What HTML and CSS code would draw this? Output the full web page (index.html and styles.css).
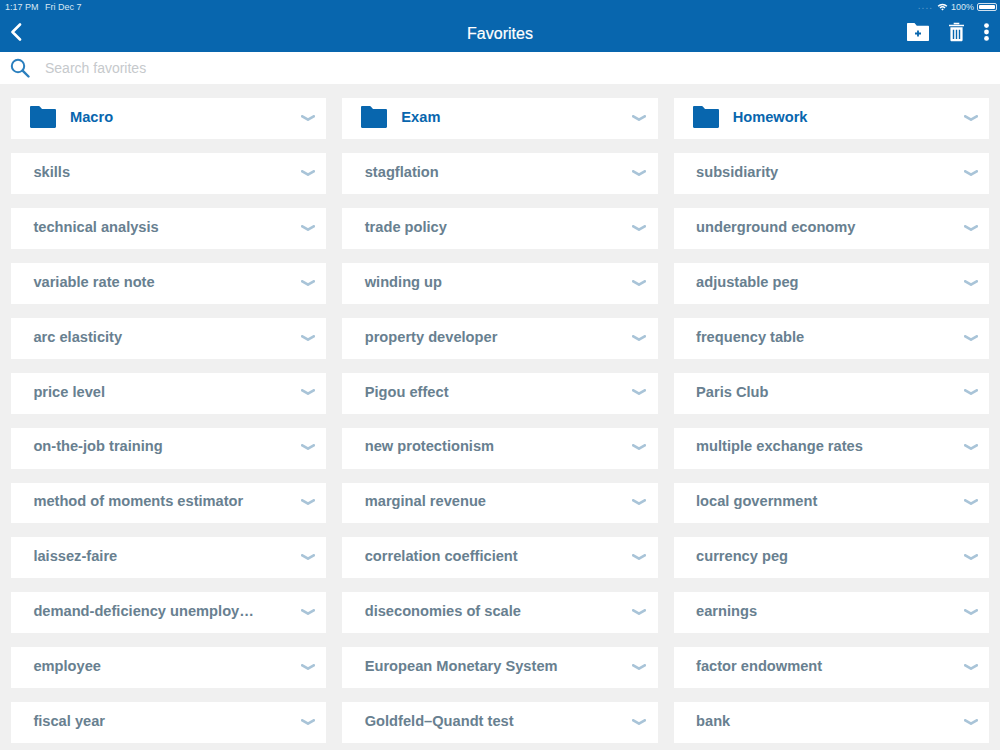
FILE: index.html
```html
<!DOCTYPE html>
<html lang="en">
<head>
<meta charset="utf-8">
<title>Favorites</title>
<link rel="stylesheet" href="styles.css">
</head>
<body>
<svg class="defs" width="0" height="0" aria-hidden="true">
  <symbol id="folder" viewBox="0 0 26 22"><path d="M0 1.200C0 .5.5 0 1.200 0h7.600c.5 0 .8.2 1 .5L12 3h12.800c.7 0 1.200.5 1.200 1.200v16.600c0 .7-.5 1.200-1.200 1.200H1.200C.5 22 0 21.500 0 20.800z"/></symbol>
  <symbol id="chev" viewBox="0 0 14 6"><path d="M1.300 1.300 7 4.600 12.700 1.300" fill="none" stroke-width="2.700" stroke-linecap="round" stroke-linejoin="round"/></symbol>
</svg>
<header class="bar">
  <div class="status">
    <div class="status-left"><span>1:17 PM</span><span>Fri Dec 7</span></div>
    <div class="status-right">
      <span class="signal">....</span>
      <svg class="wifi" width="11" height="8" viewBox="0 0 13 10"><path d="M.4 3.300a8.800 8.800 0 0 1 12.200 0l-1.300 1.300a7 7 0 0 0-9.600 0zM2.700 5.600a5.500 5.500 0 0 1 7.600 0L9 6.900a3.700 3.700 0 0 0-5 0zM4.900 7.800a2.300 2.300 0 0 1 3.200 0L6.500 9.500z" fill="#fff"/></svg>
      <span>100%</span>
      <span class="battery"><span class="battery-fill"></span></span>
    </div>
  </div>
  <div class="nav">
    <svg class="back" width="12" height="18" viewBox="0 0 12 18"><path d="M10 1.500 2.500 9l7.500 7.500" fill="none" stroke="#fff" stroke-width="2.600" stroke-linecap="round" stroke-linejoin="round"/></svg>
    <h1 class="title">Favorites</h1>
    <div class="actions">
      <svg width="22" height="18" viewBox="0 0 22 18"><path d="M0 1c0-.6.4-1 1-1h6.500L9.800 2.800H21c.6 0 1 .4 1 1V17c0 .6-.4 1-1 1H1c-.6 0-1-.4-1-1z" fill="#fff"/><path d="M11 7.500v6M8 10.500h6" stroke="#0866ae" stroke-width="1.800"/></svg>
      <svg width="15" height="20" viewBox="0 0 16 20"><path d="M0 2.200h16v1.600H0zM5 .2h6v1.500H5z" fill="#fff"/><path d="M1.500 5h13v13.500c0 .8-.6 1.400-1.400 1.400H2.900c-.8 0-1.400-.6-1.400-1.400z" fill="#fff"/><path d="M4.800 7.500v10M8 7.500v10M11.200 7.500v10" stroke="#0866ae" stroke-width="1.500"/></svg>
      <svg width="5" height="18" viewBox="0 0 5 18"><circle cx="2.500" cy="2.600" r="2.400" fill="#fff"/><circle cx="2.500" cy="9" r="2.400" fill="#fff"/><circle cx="2.500" cy="15.400" r="2.400" fill="#fff"/></svg>
    </div>
  </div>
</header>
<div class="search">
  <svg width="20" height="20" viewBox="0 0 20 20"><circle cx="8" cy="8" r="6.200" fill="none" stroke="#2a7fbe" stroke-width="2"/><path d="M12.600 12.600 18.500 18.500" stroke="#2a7fbe" stroke-width="2.400" stroke-linecap="round"/></svg>
  <span class="placeholder">Search favorites</span>
</div>
<main class="grid">
  <div class="card folder"><svg class="ficon"><use href="#folder"/></svg><span class="label">Macro</span><svg class="chev"><use href="#chev"/></svg></div>
  <div class="card folder"><svg class="ficon"><use href="#folder"/></svg><span class="label">Exam</span><svg class="chev"><use href="#chev"/></svg></div>
  <div class="card folder"><svg class="ficon"><use href="#folder"/></svg><span class="label">Homework</span><svg class="chev"><use href="#chev"/></svg></div>

  <div class="card"><span class="label">skills</span><svg class="chev"><use href="#chev"/></svg></div>
  <div class="card"><span class="label">stagflation</span><svg class="chev"><use href="#chev"/></svg></div>
  <div class="card"><span class="label">subsidiarity</span><svg class="chev"><use href="#chev"/></svg></div>

  <div class="card"><span class="label">technical analysis</span><svg class="chev"><use href="#chev"/></svg></div>
  <div class="card"><span class="label">trade policy</span><svg class="chev"><use href="#chev"/></svg></div>
  <div class="card"><span class="label">underground economy</span><svg class="chev"><use href="#chev"/></svg></div>

  <div class="card"><span class="label">variable rate note</span><svg class="chev"><use href="#chev"/></svg></div>
  <div class="card"><span class="label">winding up</span><svg class="chev"><use href="#chev"/></svg></div>
  <div class="card"><span class="label">adjustable peg</span><svg class="chev"><use href="#chev"/></svg></div>

  <div class="card"><span class="label">arc elasticity</span><svg class="chev"><use href="#chev"/></svg></div>
  <div class="card"><span class="label">property developer</span><svg class="chev"><use href="#chev"/></svg></div>
  <div class="card"><span class="label">frequency table</span><svg class="chev"><use href="#chev"/></svg></div>

  <div class="card"><span class="label">price level</span><svg class="chev"><use href="#chev"/></svg></div>
  <div class="card"><span class="label">Pigou effect</span><svg class="chev"><use href="#chev"/></svg></div>
  <div class="card"><span class="label">Paris Club</span><svg class="chev"><use href="#chev"/></svg></div>

  <div class="card"><span class="label">on-the-job training</span><svg class="chev"><use href="#chev"/></svg></div>
  <div class="card"><span class="label">new protectionism</span><svg class="chev"><use href="#chev"/></svg></div>
  <div class="card"><span class="label">multiple exchange rates</span><svg class="chev"><use href="#chev"/></svg></div>

  <div class="card"><span class="label">method of moments estimator</span><svg class="chev"><use href="#chev"/></svg></div>
  <div class="card"><span class="label">marginal revenue</span><svg class="chev"><use href="#chev"/></svg></div>
  <div class="card"><span class="label">local government</span><svg class="chev"><use href="#chev"/></svg></div>

  <div class="card"><span class="label">laissez-faire</span><svg class="chev"><use href="#chev"/></svg></div>
  <div class="card"><span class="label">correlation coefficient</span><svg class="chev"><use href="#chev"/></svg></div>
  <div class="card"><span class="label">currency peg</span><svg class="chev"><use href="#chev"/></svg></div>

  <div class="card"><span class="label">demand-deficiency unemploy…</span><svg class="chev"><use href="#chev"/></svg></div>
  <div class="card"><span class="label">diseconomies of scale</span><svg class="chev"><use href="#chev"/></svg></div>
  <div class="card"><span class="label">earnings</span><svg class="chev"><use href="#chev"/></svg></div>

  <div class="card"><span class="label">employee</span><svg class="chev"><use href="#chev"/></svg></div>
  <div class="card"><span class="label">European Monetary System</span><svg class="chev"><use href="#chev"/></svg></div>
  <div class="card"><span class="label">factor endowment</span><svg class="chev"><use href="#chev"/></svg></div>

  <div class="card"><span class="label">fiscal year</span><svg class="chev"><use href="#chev"/></svg></div>
  <div class="card"><span class="label">Goldfeld–Quandt test</span><svg class="chev"><use href="#chev"/></svg></div>
  <div class="card"><span class="label">bank</span><svg class="chev"><use href="#chev"/></svg></div>
</main>
</body>
</html>
```
FILE: styles.css
```css
* { box-sizing: border-box; }
html, body { margin: 0; height: 750px; overflow: hidden; }
body { background: #f0f0f0; font-family: "Liberation Sans", Arial, sans-serif; }
.defs { position: absolute; }

.bar { height: 52px; background: #0866ae; color: #fff; display: flex; flex-direction: column; }
.status { height: 14px; padding: 0 3.500px 0 5px; display: flex; justify-content: space-between; align-items: center; font-size: 9px; color: #dbe8f3; }
.status-left { display: flex; gap: 6.500px; }
.status-right { display: flex; align-items: center; gap: 3px; }
.signal { color: #5f9ccb; letter-spacing: 1px; margin-right: 1px; position: relative; top: -2px; font-size: 10px; }
.wifi { display: block; }
.battery { width: 19.500px; height: 8px; border: 1px solid #cfe0ee; border-radius: 2px; padding: 1px; display: flex; }
.battery-fill { flex: 1; background: #fff; border-radius: 1px; }

.nav { flex: 1; display: flex; align-items: center; justify-content: space-between; position: relative; padding: 0 11px 0 10px; }
.back { display: block; margin-bottom: 3px; }
.title { position: absolute; left: 0; right: 0; top: 11px; margin: 0; text-align: center; font-size: 16px; line-height: 18px; font-weight: 400; -webkit-text-stroke: .2px #fff; }
.actions { display: flex; align-items: center; gap: 20px; margin-bottom: 2px; }

.search { height: 32px; background: #fff; display: flex; align-items: center; padding: 0 0 0 10px; gap: 15px; }
.placeholder { color: #c6c9cc; font-size: 14px; }

.grid { display: grid; grid-template-columns: repeat(3, 1fr); column-gap: 16px; grid-auto-rows: 40.900px; row-gap: 14px; padding: 14.300px 11px 0; }
.card { background: #fff; display: flex; align-items: center; padding: 0 11.500px 0 22.400px; }
.label { font-size: 14.650px; font-weight: 700; color: #688090; flex: 1; white-space: nowrap; padding-bottom: 3.200px; }
.folder { padding-left: 19px; }
.folder .label { color: #0866ae; padding-left: 14px; padding-bottom: 3.200px; }
.ficon { width: 26px; height: 22px; fill: #0866ae; margin-bottom: 4px; }
.chev { width: 14px; height: 6px; stroke: #a9c4d8; margin-bottom: 1.500px; }
```
